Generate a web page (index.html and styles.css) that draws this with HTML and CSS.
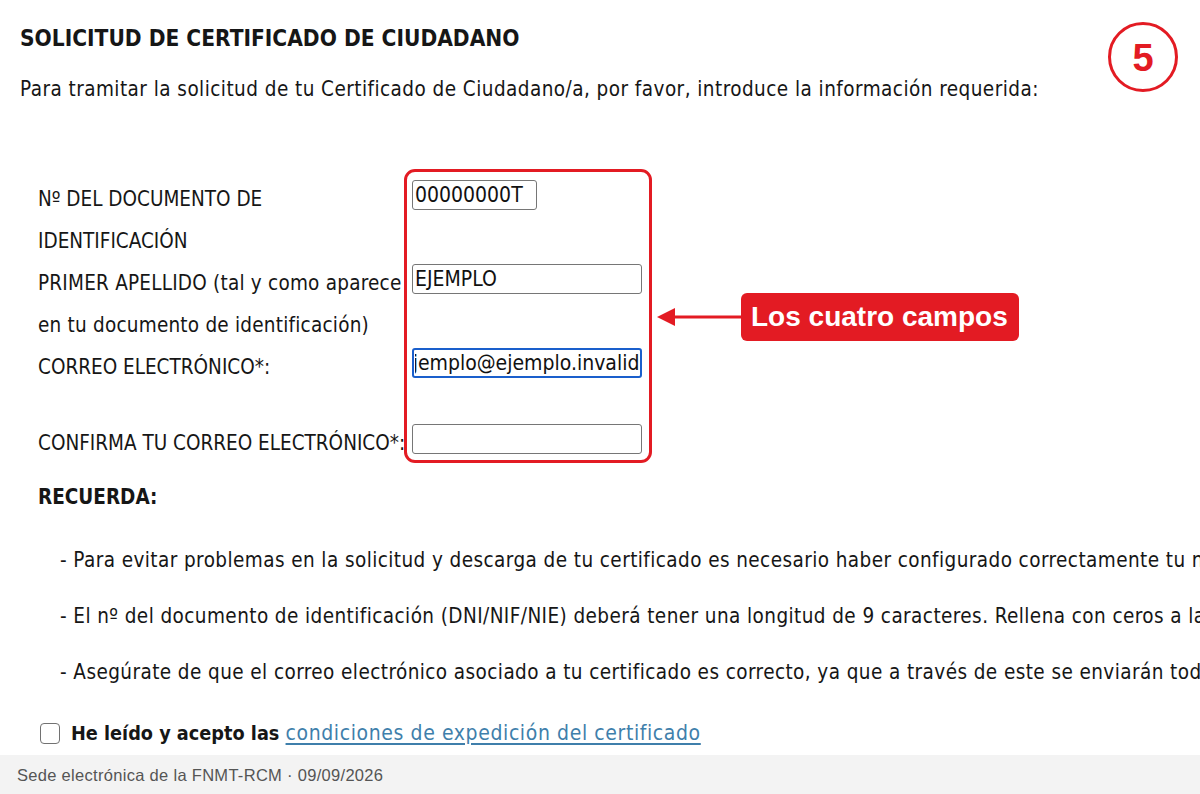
FILE: index.html
```html
<!DOCTYPE html>
<html lang="es">
<head>
<meta charset="utf-8">
<title>Solicitud de Certificado de Ciudadano</title>
<link rel="stylesheet" href="styles.css">
</head>
<body>
<div class="page">
  <main class="main">
    <h1 class="title">SOLICITUD DE CERTIFICADO DE CIUDADANO</h1>
    <p class="intro">Para tramitar la solicitud de tu Certificado de Ciudadano/a, por favor, introduce la información requerida:</p>

    <div class="form">
      <div class="label caps">Nº DEL DOCUMENTO DE<br>IDENTIFICACIÓN</div>
      <div class="field"><input class="input short" type="text" value="00000000T"></div>

      <div class="label">PRIMER APELLIDO (tal y como aparece<br>en tu documento de identificación)</div>
      <div class="field"><input class="input" type="text" value="EJEMPLO"></div>

      <div class="label caps">CORREO ELECTRÓNICO*:</div>
      <div class="field"><input class="input focused" id="email" type="text" value="ejemplo@ejemplo.invalid"></div>

      <div class="label caps gap">CONFIRMA TU CORREO ELECTRÓNICO*:</div>
      <div class="field gap"><input class="input" type="text" value=""></div>
    </div>

    <p class="recuerda">RECUERDA:</p>
    <p class="bullet">- Para evitar problemas en la solicitud y descarga de tu certificado es necesario haber configurado correctamente tu navegador.</p>
    <p class="bullet">- El nº del documento de identificación (DNI/NIF/NIE) deberá tener una longitud de 9 caracteres. Rellena con ceros a la izquierda si es necesario.</p>
    <p class="bullet">- Asegúrate de que el correo electrónico asociado a tu certificado es correcto, ya que a través de este se enviarán todas las notificaciones.</p>

    <label class="accept"><span class="checkbox"></span><span>He leído y acepto las <a class="link" href="#">condiciones de expedición del certificado</a></span></label>

    <div class="highlight"></div>
    <div class="callout">
      <svg class="arrow" width="86" height="26" viewBox="0 0 86 26"><line x1="14" y1="13" x2="86" y2="13" stroke="#e31b23" stroke-width="3"/><polygon points="2,13 20,4 20,22" fill="#e31b23"/></svg>
      <span class="callout-label">Los cuatro campos</span>
    </div>
    <div class="step">5</div>
  </main>
  <footer class="footer">Sede electrónica de la FNMT-RCM · 09/09/2026</footer>
</div>
<script src="script.js"></script>
</body>
</html>
```

FILE: styles.css
```css
html, body {
  margin: 0;
  padding: 0;
  background: #fff;
}
body {
  font-family: "DejaVu Sans Condensed", "DejaVu Sans", sans-serif;
  color: #161616;
  overflow: hidden;
}
.page {
  height: 794px;
  display: flex;
  flex-direction: column;
}
.main {
  flex: 1;
  position: relative;
  padding: 0 0 0 20px;
  white-space: nowrap;
  overflow: hidden;
}
.title {
  margin: 24px 0 0;
  font-size: 22.5px;
  line-height: 28px;
  font-weight: bold;
}
.intro {
  margin: 23px 0 0;
  font-size: 20.5px;
  letter-spacing: 0.45px;
  line-height: 28px;
}
.form {
  margin: 75px 0 0 18px;
  display: grid;
  grid-template-columns: 374px 240px;
  font-size: 20.5px;
  letter-spacing: 0.22px;
  line-height: 42px;
}
.label.caps {
  letter-spacing: 0;
}
.label.gap, .field.gap {
  margin-top: 34px;
}
.field {
  display: flex;
  align-items: flex-start;
  padding-top: 2px;
}
.input {
  display: block;
  box-sizing: border-box;
  width: 230px;
  height: 30px;
  margin: 0;
  padding: 0 2px;
  border: 1px solid #767676;
  border-radius: 3px;
  font-family: "DejaVu Sans Condensed", "DejaVu Sans", sans-serif;
  font-size: 21px;
  letter-spacing: 0;
  color: #111;
  background: #fff;
}
.input.short {
  width: 125px;
}
.input.focused {
  border: 2px solid #1a5fcc;
  outline: none;
  padding: 0 1px;
}
.recuerda {
  margin: 19px 0 0 18px;
  font-size: 20.5px;
  line-height: 28px;
  font-weight: bold;
}
.bullet {
  margin: 28px 0 0 40px;
  font-size: 20.5px;
  letter-spacing: 0.42px;
  line-height: 28px;
}
.recuerda + .bullet {
  margin-top: 35px;
}
.accept {
  display: flex;
  align-items: center;
  gap: 11px;
  margin: 33px 0 0 20px;
  font-size: 19.7px;
  line-height: 28px;
  font-weight: bold;
}
.checkbox {
  width: 18px;
  height: 19px;
  border: 1.5px solid #727272;
  border-radius: 4px;
  background: #fff;
}
.link {
  color: #3f7fab;
  font-weight: normal;
  font-size: 21px;
  letter-spacing: 0.6px;
  text-decoration: underline;
  text-underline-offset: 3px;
}
.highlight {
  position: absolute;
  left: 404px;
  top: 169px;
  width: 242px;
  height: 288px;
  border: 3px solid #e31b23;
  border-radius: 11px;
}
.callout {
  position: absolute;
  left: 655px;
  top: 293px;
  display: flex;
  align-items: center;
}
.arrow {
  display: block;
}
.callout-label {
  display: block;
  box-sizing: border-box;
  width: 278px;
  height: 48px;
  line-height: 48px;
  padding-left: 10px;
  background: #e31b23;
  border-radius: 6px;
  color: #fff;
  font-family: "Liberation Sans", Arial, sans-serif;
  font-weight: bold;
  font-size: 28px;
}
.step {
  position: absolute;
  left: 1108px;
  top: 22px;
  width: 64px;
  height: 64px;
  border: 3.5px solid #e31b23;
  border-radius: 50%;
  color: #e31b23;
  font-family: "Liberation Sans", Arial, sans-serif;
  font-weight: bold;
  font-size: 38px;
  line-height: 66px;
  text-align: center;
}
.footer {
  height: 39px;
  line-height: 41px;
  background: #f3f3f3;
  padding-left: 17px;
  font-family: "Liberation Sans", Arial, sans-serif;
  font-size: 16.5px;
  letter-spacing: 0.3px;
  color: #555;
}
```

FILE: script.js
```js
var e = document.getElementById('email');
e.scrollLeft = e.scrollWidth;
```
